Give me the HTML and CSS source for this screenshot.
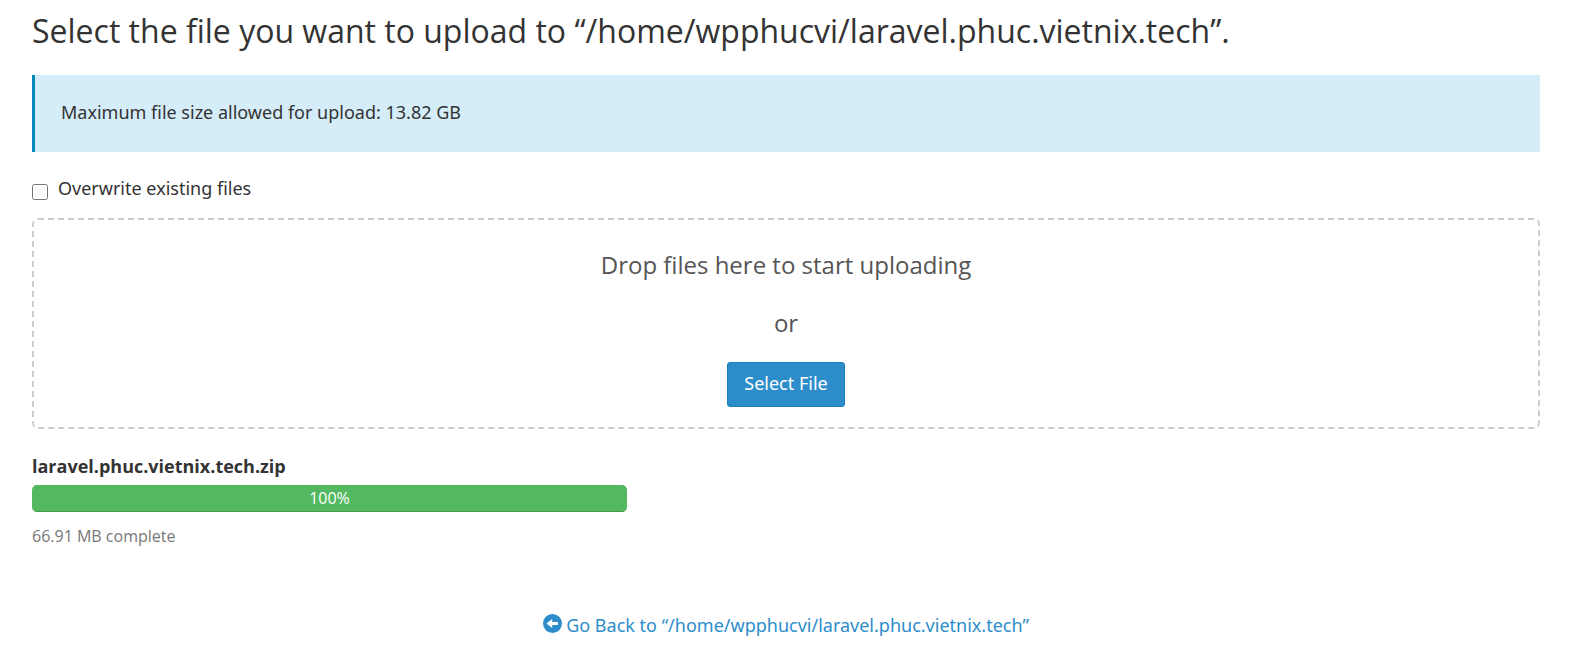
FILE: index.html
```html
<!DOCTYPE html>
<html lang="en">
<head>
<meta charset="utf-8">
<meta name="viewport" content="width=device-width, initial-scale=1">
<title>File Upload</title>
<link rel="stylesheet" href="styles.css">
</head>
<body>
<main class="page">
  <h1 class="title">Select the file you want to upload to “/home/wpphucvi/laravel.phuc.vietnix.tech”.</h1>
  <div class="callout">Maximum file size allowed for upload: 13.82 GB</div>
  <label class="overwrite"><input class="overwrite-box" type="checkbox"><span>Overwrite existing files</span></label>
  <section class="dropzone">
    <p class="drop-text">Drop files here to start uploading</p>
    <p class="drop-text">or</p>
    <button class="select-file" type="button">Select File</button>
  </section>
  <section class="upload">
    <div class="file-name">laravel.phuc.vietnix.tech.zip</div>
    <div class="progress"><div class="progress-bar" style="width:100%">100%</div></div>
    <div class="status">66.91 MB complete</div>
  </section>
  <a class="back" href="#"><svg class="back-icon" viewBox="0 0 20 20" aria-hidden="true"><circle cx="10" cy="10" r="10" fill="currentColor"/><path d="M3.700 10l6-4.700v3h6v3.400h-6v3z" fill="#fff"/></svg><span>Go Back to “/home/wpphucvi/laravel.phuc.vietnix.tech”</span></a>
</main>
</body>
</html>
```
FILE: styles.css
```css
* { box-sizing: border-box; }
body {
  margin: 0;
  background: #fff;
  color: #333;
  font-family: "Noto Sans", "Open Sans", sans-serif;
  font-size: 18px;
  line-height: 26px;
}
.title, .drop-text, .file-name, .progress-bar, .status {
  font-family: "Open Sans", "Noto Sans", sans-serif;
}
.page { display: flex; flex-direction: column; padding: 9px 31px 32px 32px; }
.title { margin: 0 0 22px; font-size: 32px; font-weight: 400; line-height: 44px; }
.callout {
  padding: 24px 26px 27px;
  border-left: 3px solid #08b;
  background: #d5edf9;
}
.overwrite { display: flex; align-items: flex-start; align-self: flex-start; gap: 10px; margin: 23px 0 17px; }
.overwrite-box { width: 16px; height: 16px; margin: 9px 0 0; }
.dropzone {
  display: flex;
  flex-direction: column;
  align-items: center;
  gap: 20px;
  padding: 26px 20px 20px;
  border: 2px dashed #ccc;
  border-radius: 6px;
  color: #555;
  font-size: 24px;
}
.drop-text { margin: 0; line-height: 38px; }
.select-file {
  padding: 7px 16px 10px;
  border: 1px solid #1880bf;
  border-radius: 3px;
  background: #2d8dca;
  color: #fff;
  font: inherit;
  font-size: 18px;
  line-height: 26px;
}
.upload { width: 595px; max-width: 100%; margin-top: 24px; }
.file-name { font-weight: 700; }
.progress { margin: 6px 0 11px; border-radius: 5px; background: #f5f5f5; overflow: hidden; }
.progress-bar {
  border-bottom: 1px solid #469b50;
  background: #54b860;
  color: #fff;
  font-size: 16px;
  text-align: center;
}
.status { color: #777; font-size: 16px; }
.back { display: flex; align-items: flex-start; align-self: center; gap: 4px; margin-top: 63px; color: #2d8dca; text-decoration: none; }
.back-icon { width: 19px; height: 19px; margin-top: 2px; }
```
